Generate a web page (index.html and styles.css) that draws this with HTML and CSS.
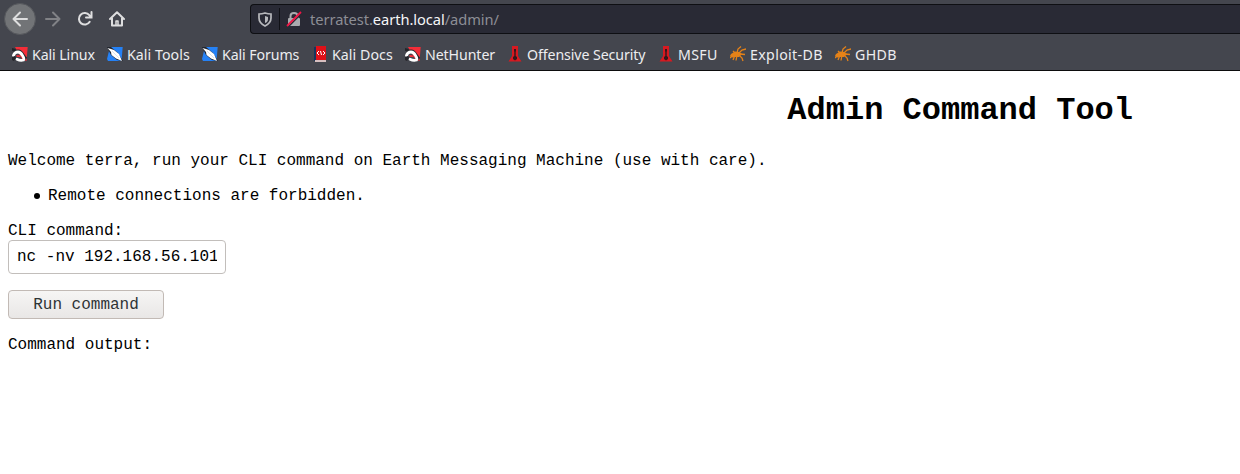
FILE: index.html
```html
<!DOCTYPE html>
<html lang="en">
<head>
<meta charset="utf-8">
<title>Admin Command Tool</title>
<link rel="stylesheet" href="styles.css">
</head>
<body>
<svg class="symbols" aria-hidden="true">
  <symbol id="dragon" viewBox="0 0 16 16">
    <path d="M3 1H15.700L14.500 15L10 13Z" fill="#f42d38"/>
    <path d="M0 2L4 3L3 5L0 5Z" fill="#24252a"/>
    <path d="M2 8Q3 5 6 5Q9 5 11 9L14 13" fill="none" stroke="#24252a" stroke-width="3"/>
    <path d="M1.500 9.500Q2.500 6 6 6Q8.500 6 10.500 9.500Q12.500 12.500 11.500 14Q8.500 15 5 13.200" fill="none" stroke="#fff" stroke-width="2.800" stroke-linecap="round"/>
    <path d="M4 9.500Q7 8 9 11L5 11Z" fill="#f42d38"/>
    <path d="M0 11L3 10L4 12L2 15L0 14Z" fill="#24252a"/>
  </symbol>
  <symbol id="knife" viewBox="0 0 16 16">
    <path d="M3 1H15.700L14.500 15H1L0 13Z" fill="#2581f5"/>
    <path d="M0 1L4 1L11 7L16 15L10 14L4 9Z" fill="#20242d"/>
    <path d="M.500 2L4 3L7 4L12 8L15 15L9 12.500L4.500 9L4 6Z" fill="#fff"/>
    <path d="M5 5L12 12" stroke="#bbc7d7" stroke-width=".5"/>
  </symbol>
  <symbol id="book" viewBox="0 0 16 16">
    <path d="M2 1H4V15H2Z" fill="#17345d"/>
    <path d="M4 0H14V14H4Z" fill="#df1118"/>
    <path d="M3 14H14V16H3Z" fill="#d7bfc0"/>
    <path d="M7 5L5 7L7 9M11 5L13 7L11 9M8.500 5L9.500 9" fill="none" stroke="#fff" stroke-width="1"/>
  </symbol>
  <symbol id="tower" viewBox="0 0 16 16">
    <path d="M5 0H11V10L14.500 15.500H1.500L5 10Z" fill="#d71920"/>
    <path d="M7 3H9V5L8.700 6V10L10 11V13L8 14.500L6 13V11L7.300 10V6L7 5Z" fill="#32181c"/>
  </symbol>
  <symbol id="bug" viewBox="0 0 16 16">
    <path d="M1 8L5 5.500L9 6L12 8L9 11L5 11L2 11.500L0 10Z" fill="#e58218"/>
    <path d="M5 7L3 5M7 7L8 3L11 .500M9 7L12 4L16 3M10 8L15 8.500M5 9L3 14M7 9L6 14.500M9 9L12 12L13 15M2 10L0 12" fill="none" stroke="#e58218" stroke-width="1.300"/>
  </symbol>
</svg>
<header class="browser">
  <div class="toolbar">
    <nav class="controls">
      <span class="back"><svg viewBox="0 0 16 16"><path d="M15 8H1.500M8 1.500L1.500 8L8 14.500"/></svg></span>
      <svg class="forward" viewBox="0 0 16 16"><path d="M1 8H14.500M8 1.500L14.500 8L8 14.500"/></svg>
      <svg class="reload" viewBox="0 0 16 16"><path d="M12.700 10.800A5.800 5.800 0 1 1 12.300 4.200L14 6M14.500 1V6.500H9" stroke-linejoin="miter"/></svg>
      <svg class="home" viewBox="0 0 16 16"><path d="M1 8L8 1.300L15 8M3 7V14.500H13V7"/><path d="M7 14V10H9V14" stroke-width="1.500"/></svg>
    </nav>
    <div class="address">
      <svg class="shield" viewBox="0 0 14 15"><path d="M7 1Q10 2 13 2V6Q13 11 7 14Q1 11 1 6V2Q4 2 7 1Z" fill="none" stroke="#b8b9bd" stroke-width="1.700"/><path d="M7 4L10 5V7Q10 10 7 11Z" fill="#b8b9bd"/></svg>
      <i class="divider"></i>
      <svg class="lock" viewBox="0 0 16 16"><path d="M4.500 7V5Q4.500 2 8 2Q11.500 2 11.500 5V7" fill="none" stroke="#a9aaae" stroke-width="2"/><rect x="2" y="7" width="12" height="8" rx="1" fill="#a9aaae"/><path d="M2 16L16 2" stroke="#292a35" stroke-width="1.500"/><path d="M1 15L15 1" stroke="#f01545" stroke-width="1.800"/></svg>
      <span class="url">terratest.<b>earth.local</b>/admin/</span>
    </div>
  </div>
  <nav class="bookmarks">
    <a class="w95"><svg><use href="#dragon"/></svg>Kali Linux</a>
    <a class="w95 loose"><svg><use href="#knife"/></svg>Kali Tools</a>
    <a class="w110"><svg><use href="#knife"/></svg>Kali Forums</a>
    <a class="w93 loose"><svg><use href="#book"/></svg>Kali Docs</a>
    <a class="w102"><svg><use href="#dragon"/></svg>NetHunter</a>
    <a class="w151"><svg><use href="#tower"/></svg>Offensive Security</a>
    <a class="w72 wide"><svg><use href="#tower"/></svg>MSFU</a>
    <a class="w105 wide"><svg><use href="#bug"/></svg>Exploit-DB</a>
    <a class="wide"><svg><use href="#bug"/></svg>GHDB</a>
  </nav>
</header>
<main class="page">
  <h1>Admin Command Tool</h1>
  <p class="welcome">Welcome terra, run your CLI command on Earth Messaging Machine (use with care).</p>
  <ul><li>Remote connections are forbidden.</li></ul>
  <form class="command-form">
    <label for="command">CLI command:</label>
    <input id="command" type="text" value="nc -nv 192.168.56.101">
    <button type="button">Run command</button>
  </form>
  <p class="output">Command output:</p>
</main>
</body>
</html>
```
FILE: styles.css
```css
* { box-sizing: border-box; }
body { margin: 0; height: 474px; overflow: hidden; background: #fff; color: #000; }
.symbols { display: none; }
.browser { height: 71px; background: #44464e; border-bottom: 1px solid #0c0c0d; font-family: "Noto Sans", sans-serif; }
.toolbar { display: flex; height: 38px; padding-top: 3px; }
.controls { display: flex; align-items: center; flex: none; width: 250px; height: 32px; padding-left: 4px; }
.controls svg { width: 16px; height: 16px; flex: none; fill: none; stroke: #dededf; stroke-width: 2; stroke-linecap: round; stroke-linejoin: round; }
.back { display: flex; align-items: center; justify-content: center; width: 32px; height: 32px; background: #727477; border: 1px solid #55575c; border-radius: 50%; }
.controls .forward { margin-left: 9px; stroke: #818286; }
.controls .reload { margin-left: 16px; }
.controls .home { margin-left: 16px; }
.address { display: flex; align-items: center; flex: 1; height: 30px; margin-top: 1px; padding-left: 7px; background: #292a35; border: 1px solid #0e0f13; border-right: 0; border-radius: 4px 0 0 4px; }
.shield { width: 14px; height: 15px; }
.divider { width: 1px; height: 22px; margin-left: 7px; background: #101116; }
.lock { width: 16px; height: 16px; margin-left: 6px; }
.url { margin-left: 8px; color: #8d8e95; font-size: 14.67px; line-height: 20px; letter-spacing: -.06px; white-space: nowrap; }
.url b { color: #f6f6f8; font-weight: 400; }
.bookmarks { display: flex; height: 32px; padding-left: 12px; }
.bookmarks a { display: flex; align-items: center; gap: 4px; flex: none; color: #ededf0; font-size: 14.2px; letter-spacing: -.1px; white-space: nowrap; }
.bookmarks .loose { letter-spacing: .05px; }
.bookmarks .wide { letter-spacing: .35px; }
.bookmarks svg { width: 16px; height: 16px; flex: none; }
.w95 { width: 95px; }
.w110 { width: 110px; }
.w93 { width: 93px; }
.w102 { width: 102px; }
.w151 { width: 151px; }
.w72 { width: 72px; }
.w105 { width: 105px; }
.page { padding: 0 8px; font: 16px/18px "Liberation Mono", monospace; }
h1 { margin: 0; padding: 21px 99px 0 0; text-align: right; font-size: 32px; line-height: 37px; }
.welcome { margin: 23px 0 0; }
ul { margin: 17px 0 0; padding-left: 26px; list-style: none; }
li { display: flex; align-items: center; gap: 8px; }
li::before { content: ""; width: 6px; height: 6px; margin-bottom: 1px; border-radius: 50%; background: #000; }
.command-form { display: flex; flex-direction: column; align-items: flex-start; margin-top: 17px; }
input { width: 218px; height: 34px; margin: 0; padding: 0 8px; background: #fff; color: #000; border: 1px solid #c2bebb; border-radius: 4px; font: 16px/18px "Liberation Mono", monospace; }
button { width: 156px; height: 29px; margin-top: 16px; padding: 0; background: linear-gradient(#f6f5f4, #e9e7e6); color: #2e3436; border: 1px solid #c2bab5; border-radius: 4px; font: 16px/18px "Liberation Mono", monospace; }
.output { margin: 17px 0 0; }
```
